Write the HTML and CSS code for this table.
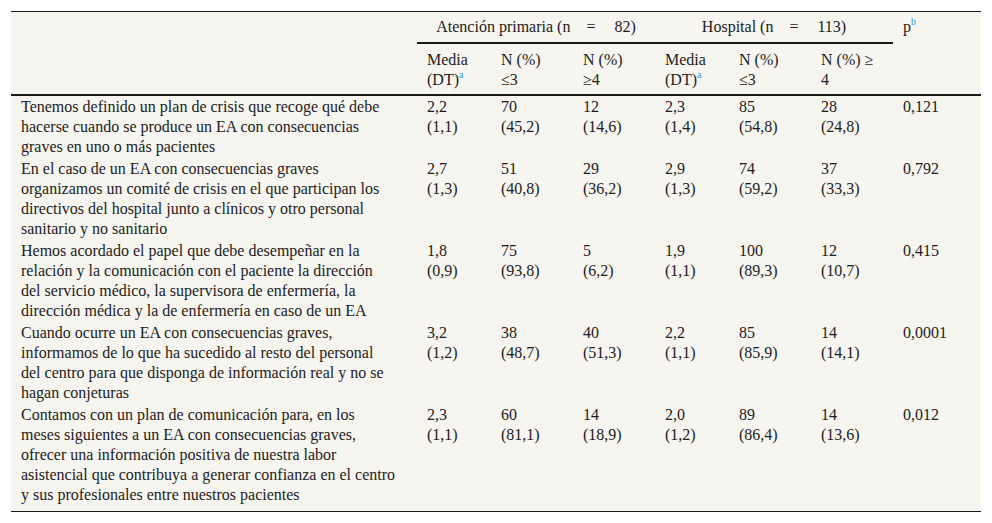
FILE: index.html
```html
<!DOCTYPE html>
<html lang="es">
<head>
<meta charset="utf-8">
<title>Tabla</title>
<link rel="stylesheet" href="styles.css">
</head>
<body>
<div class="wrap">
<table class="data">
  <colgroup>
    <col class="c-label">
    <col class="c-narrow">
    <col class="c-wide">
    <col class="c-wide">
    <col class="c-narrow">
    <col class="c-wide">
    <col class="c-wide">
    <col class="c-p">
  </colgroup>
  <thead>
    <tr class="h1">
      <th rowspan="2" class="span2"></th>
      <th colspan="3" class="group">Atención primaria (n<span class="gap"></span>=<span class="gap2"></span>82)</th>
      <th colspan="3" class="group">Hospital (n<span class="gap"></span>=<span class="gap2"></span>113)</th>
      <th rowspan="2" class="span2">p<sup class="fn">b</sup></th>
    </tr>
    <tr class="h2">
      <th>Media<br>(DT)<sup class="fn">a</sup></th>
      <th>N (%)<br>≤3</th>
      <th>N (%)<br>≥4</th>
      <th>Media<br>(DT)<sup class="fn">a</sup></th>
      <th>N (%)<br>≤3</th>
      <th>N (%) ≥<br>4</th>
    </tr>
  </thead>
  <tbody>
    <tr>
      <td class="label">Tenemos definido un plan de crisis que recoge qué debe<br>hacerse cuando se produce un EA con consecuencias<br>graves en uno o más pacientes</td>
      <td>2,2<br>(1,1)</td><td>70<br>(45,2)</td><td>12<br>(14,6)</td><td>2,3<br>(1,4)</td><td>85<br>(54,8)</td><td>28<br>(24,8)</td><td>0,121</td>
    </tr>
    <tr>
      <td class="label">En el caso de un EA con consecuencias graves<br>organizamos un comité de crisis en el que participan los<br>directivos del hospital junto a clínicos y otro personal<br>sanitario y no sanitario</td>
      <td>2,7<br>(1,3)</td><td>51<br>(40,8)</td><td>29<br>(36,2)</td><td>2,9<br>(1,3)</td><td>74<br>(59,2)</td><td>37<br>(33,3)</td><td>0,792</td>
    </tr>
    <tr>
      <td class="label">Hemos acordado el papel que debe desempeñar en la<br>relación y la comunicación con el paciente la dirección<br>del servicio médico, la supervisora de enfermería, la<br>dirección médica y la de enfermería en caso de un EA</td>
      <td>1,8<br>(0,9)</td><td>75<br>(93,8)</td><td>5<br>(6,2)</td><td>1,9<br>(1,1)</td><td>100<br>(89,3)</td><td>12<br>(10,7)</td><td>0,415</td>
    </tr>
    <tr>
      <td class="label">Cuando ocurre un EA con consecuencias graves,<br>informamos de lo que ha sucedido al resto del personal<br>del centro para que disponga de información real y no se<br>hagan conjeturas</td>
      <td>3,2<br>(1,2)</td><td>38<br>(48,7)</td><td>40<br>(51,3)</td><td>2,2<br>(1,1)</td><td>85<br>(85,9)</td><td>14<br>(14,1)</td><td>0,0001</td>
    </tr>
    <tr class="last">
      <td class="label">Contamos con un plan de comunicación para, en los<br>meses siguientes a un EA con consecuencias graves,<br>ofrecer una información positiva de nuestra labor<br>asistencial que contribuya a generar confianza en el centro<br>y sus profesionales entre nuestros pacientes</td>
      <td>2,3<br>(1,1)</td><td>60<br>(81,1)</td><td>14<br>(18,9)</td><td>2,0<br>(1,2)</td><td>89<br>(86,4)</td><td>14<br>(13,6)</td><td>0,012</td>
    </tr>
  </tbody>
</table>
</div>
</body>
</html>
```

FILE: styles.css
```css
html, body {
  margin: 0;
  padding: 0;
  background: #ffffff;
}

.wrap {
  padding: 11px 11px 0 11px;
}

.data {
  width: 970px;
  table-layout: fixed;
  border-collapse: separate;
  border-spacing: 0;
  background: #f7f5f0;
  color: #1c1c1c;
  font-family: "Liberation Serif", "Times New Roman", serif;
  font-size: 16px;
  line-height: 20px;
  border-top: 1px solid #1a1a1a;
  border-bottom: 1px solid #1a1a1a;
}

.c-label { width: 406px; }
.c-narrow { width: 74px; }
.c-wide { width: 82px; }
.c-p { width: 88px; }

th, td {
  text-align: left;
  vertical-align: top;
  font-weight: normal;
  padding: 1px 10px;
}

td.label {
  padding-right: 4px;
}

.h1 th {
  padding-top: 5px;
  padding-bottom: 5px;
}

.h1 .group {
  text-align: center;
  border-bottom: 2px solid #1a1a1a;
}

.h2 th {
  padding-top: 6px;
  padding-bottom: 4px;
  border-bottom: 2px solid #1a1a1a;
}

.h1 .span2 {
  border-bottom: 2px solid #1a1a1a;
}

.gap {
  display: inline-block;
  width: 16px;
}

.gap2 {
  display: inline-block;
  width: 19px;
}

.fn {
  color: #3a9bdc;
  font-size: 10px;
  line-height: 0;
  vertical-align: 7px;
}

.last td {
  padding-bottom: 6px;
}
```
